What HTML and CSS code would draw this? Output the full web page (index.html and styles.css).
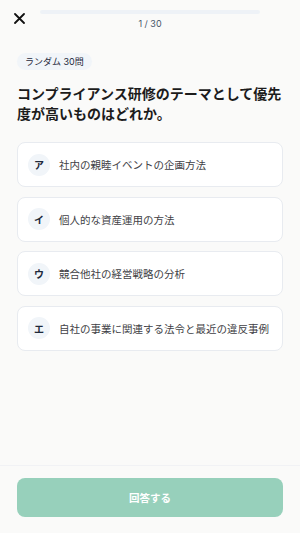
FILE: index.html
```html
<!DOCTYPE html>
<html lang="ja">
<head>
  <meta charset="UTF-8">
  <title>クイズ</title>
  <link rel="stylesheet" href="styles.css">
</head>
<body>

  <div class="page">
    <header class="top">
      <button class="close" aria-label="閉じる">
        <svg width="11" height="11" viewBox="0 0 11 11">
          <path d="M1 1 L10 10 M10 1 L1 10" stroke="#111" stroke-width="1.8" stroke-linecap="round" fill="none"/>
        </svg>
      </button>
      <div class="progress">
        <div class="bar"><div class="fill" style="width: 0%"></div></div>
        <div class="count">1 / 30</div>
      </div>
    </header>

    <main class="content">
      <span class="badge">ランダム 30問</span>
      <h1 class="question">コンプライアンス研修のテーマとして優先度が高いものはどれか。</h1>

      <div class="options">
        <div class="option"><span class="mark">ア</span><span class="label">社内の親睦イベントの企画方法</span></div>
        <div class="option"><span class="mark">イ</span><span class="label">個人的な資産運用の方法</span></div>
        <div class="option"><span class="mark">ウ</span><span class="label">競合他社の経営戦略の分析</span></div>
        <div class="option"><span class="mark">エ</span><span class="label">自社の事業に関連する法令と最近の違反事例</span></div>
      </div>
    </main>

    <footer class="bottom">
      <button class="submit" disabled>回答する</button>
    </footer>
  </div>

</body>
</html>
```

FILE: styles.css
```css
html, body {
  margin: 0;
  padding: 0;
}
body {
  font-family: Inter, "Noto Sans CJK JP", sans-serif;
  background-color: #fafaf9;
  color: #1f2937;
}
.page {
  display: flex;
  flex-direction: column;
  height: 100vh;
}
.top {
  display: grid;
  grid-template-columns: 26px 1fr 26px;
  padding: 10px 14px 0;
}
.close {
  border: none;
  background: none;
  padding: 0;
  margin-top: 3px;
  width: 12px;
  height: 11px;
  display: flex;
}
.progress {
  display: flex;
  flex-direction: column;
  align-items: center;
}
.bar {
  width: 100%;
  height: 4px;
  border-radius: 2px;
  background-color: #eef2f7;
}
.fill {
  height: 100%;
  border-radius: 2px;
  background-color: #97d0bb;
}
.count {
  margin-top: 4px;
  font-size: 9px;
  line-height: 12px;
  color: #475569;
}
.content {
  flex: 1;
  padding: 0 17px;
}
.badge {
  display: inline-block;
  margin-top: 23px;
  padding: 0 8px;
  height: 17px;
  line-height: 17px;
  font-size: 9px;
  border-radius: 9px;
  background-color: #f1f5f9;
  color: #1e293b;
}
.question {
  margin: 14px 0 18px;
  font-size: 14px;
  line-height: 20px;
  font-weight: 700;
  color: #1c1c1c;
}
.options {
  display: flex;
  flex-direction: column;
  gap: 9.5px;
}
.option {
  display: flex;
  align-items: center;
  gap: 9px;
  height: 45px;
  box-sizing: border-box;
  padding: 0 10px;
  border: 1px solid #e8ebf0;
  border-radius: 8px;
  background-color: #fff;
}
.mark {
  width: 22px;
  height: 22px;
  flex-shrink: 0;
  border-radius: 50%;
  background-color: #f1f5f9;
  display: flex;
  align-items: center;
  justify-content: center;
  font-size: 10px;
  font-weight: 700;
  color: #1e293b;
}
.label {
  font-size: 10.5px;
  color: #3f3f46;
}
.bottom {
  border-top: 1px solid #f1f2f5;
  padding: 12px 17px 16px;
}
.submit {
  width: 100%;
  height: 39px;
  border: none;
  border-radius: 8px;
  background-color: #97d0bb;
  color: #fff;
  font-family: inherit;
  font-size: 10.5px;
  font-weight: 700;
}
```
